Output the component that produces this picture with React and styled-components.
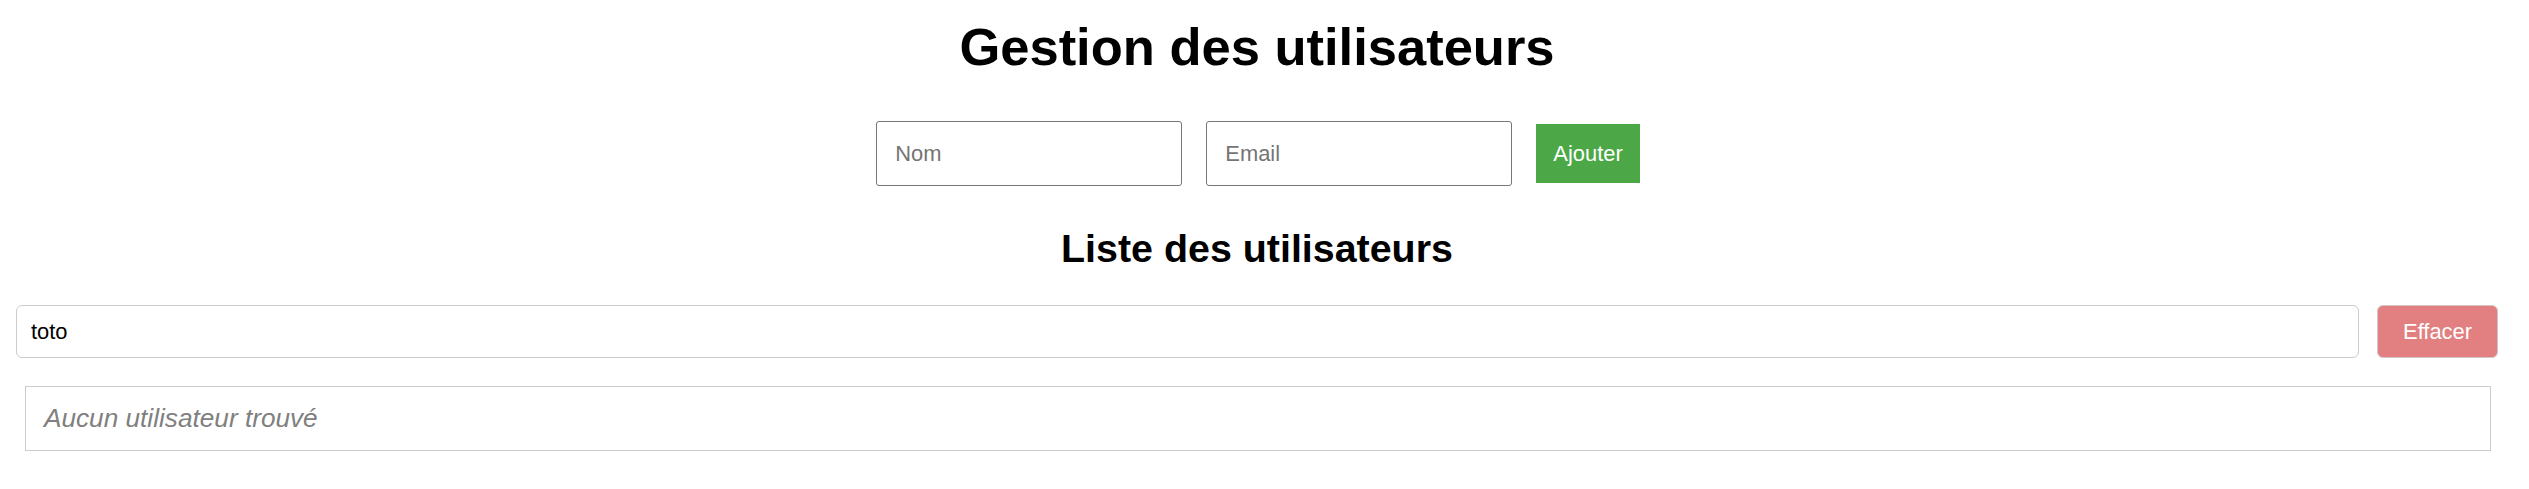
import React, { useState } from 'react'
import styled, { createGlobalStyle } from 'styled-components'

const GlobalStyle = createGlobalStyle`
  body {
    margin: 0;
    background: #fff;
    font-family: "Liberation Sans", Arial, sans-serif;
  }
`
const Page = styled.div`
  box-sizing: border-box;
  width: calc(100% - 15px);
  padding: 0 16px;
  display: flex;
  flex-direction: column;
`
const Title = styled.h1`
  margin: 17px 0 0;
  font-size: 52.5px;
  line-height: 60px;
  font-weight: bold;
  text-align: center;
  color: #000;
`
const Form = styled.form`
  margin-top: 44px;
  margin-left: 2px;
  display: flex;
  justify-content: center;
  align-items: center;
  gap: 24px;
`
const Field = styled.input`
  box-sizing: border-box;
  width: 306px;
  height: 65px;
  padding: 0 18px;
  border: 1px solid #767676;
  border-radius: 3px;
  font-family: inherit;
  font-size: 21.9px;
  color: #000;
  outline: none;
  &::placeholder {
    color: #757575;
  }
`
const Button = styled.button`
  box-sizing: border-box;
  height: ${(p) => p.height || 53}px;
  padding: 0 ${(p) => p.padX || 17}px;
  border: ${(p) => (p.bordered ? '1px solid #d4c6c6' : 'none')};
  border-radius: ${(p) => p.radius || 0}px;
  background: ${(p) => p.bg};
  color: #fff;
  font-family: inherit;
  font-size: 21.9px;
  cursor: pointer;
`
const Subtitle = styled.h2`
  margin: 40px 0 0;
  font-size: 39.4px;
  line-height: 45px;
  font-weight: bold;
  text-align: center;
  color: #000;
`
const SearchRow = styled.div`
  margin-top: 34px;
  display: flex;
  align-items: center;
  gap: 18px;
`
const Search = styled.input`
  box-sizing: border-box;
  flex: 1;
  height: 53px;
  padding: 0 14px;
  border: 1px solid #cccccc;
  border-radius: 6px;
  font-family: inherit;
  font-size: 21.9px;
  color: #000;
  outline: none;
`
const Results = styled.ul`
  box-sizing: border-box;
  list-style: none;
  margin: 28px 7px 0 9px;
  padding: 0 18px;
  height: 65px;
  border: 1px solid #cccccc;
  display: flex;
  align-items: center;
`
const Empty = styled.li`
  font-size: 26.2px;
  font-style: italic;
  color: #808080;
`

export default function App() {
  const [nom, setNom] = useState('')
  const [email, setEmail] = useState('')
  const [query, setQuery] = useState('toto')

  return (
    <>
      <GlobalStyle />
      <Page>
        <Title>Gestion des utilisateurs</Title>
        <Form onSubmit={(e) => e.preventDefault()}>
          <Field
            type='text'
            placeholder='Nom'
            value={nom}
            onChange={(e) => setNom(e.target.value)}
          />
          <Field
            type='email'
            placeholder='Email'
            value={email}
            onChange={(e) => setEmail(e.target.value)}
          />
          <Button type='submit' bg='#4ca846' height={59}>Ajouter</Button>
        </Form>
        <Subtitle>Liste des utilisateurs</Subtitle>
        <SearchRow>
          <Search
            type='text'
            value={query}
            onChange={(e) => setQuery(e.target.value)}
          />
          <Button
            type='button'
            bg='#e27f80'
            bordered
            radius={6}
            padX={25}
            onClick={() => setQuery('')}
          >
            Effacer
          </Button>
        </SearchRow>
        <Results>
          <Empty>Aucun utilisateur trouvé</Empty>
        </Results>
      </Page>
    </>
  )
}
